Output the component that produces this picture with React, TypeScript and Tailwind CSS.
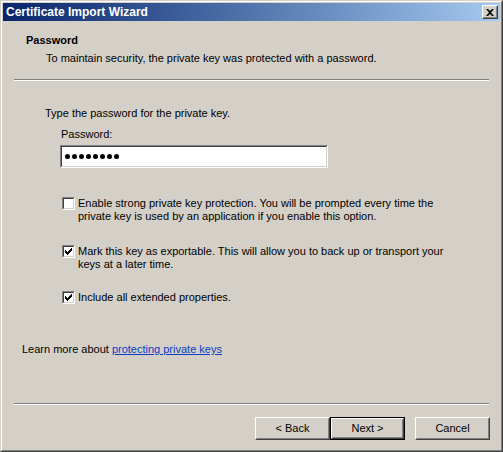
import React from "react";

function Check({ checked }: { checked?: boolean }) {
  return (
    <div className="shrink-0 w-[13px] h-[13px] border border-t-[#808080] border-l-[#808080] border-b-white border-r-white">
      <div className="w-full h-full border border-t-[#404040] border-l-[#404040] border-b-[#d4d0c8] border-r-[#d4d0c8] bg-white flex items-center justify-center">
        {checked && (
          <svg width="7" height="7" viewBox="0 0 7 7">
            <path d="M0 2h1v1h1v1h1V3h1V2h1V1h1V0h1v3H6v1H5v1H4v1H3v1H2V6H1V5H0z" fill="#000" />
          </svg>
        )}
      </div>
    </div>
  );
}

function Button({ label, isDefault }: { label: string; isDefault?: boolean }) {
  const face = (
    <div className="w-full h-full border border-t-white border-l-white border-b-[#404040] border-r-[#404040]">
      <div className="w-full h-full border border-t-[#d4d0c8] border-l-[#d4d0c8] border-b-[#808080] border-r-[#808080] flex items-center justify-center text-black">
        {label}
      </div>
    </div>
  );
  return (
    <div className={"w-[75px] h-[23px] " + (isDefault ? "border border-black" : "")}>{face}</div>
  );
}

function Separator() {
  return <div className="ml-[11px] w-[475px] h-[2px] border-t border-t-[#808080] border-b border-b-white" />;
}

export default function App() {
  return (
    <div
      className="w-[503px] h-[452px] bg-[#d4d0c8] border border-t-[#d4d0c8] border-l-[#d4d0c8] border-b-[#404040] border-r-[#404040] text-[11px] leading-[13px] text-black"
      style={{ fontFamily: '"Liberation Sans", Arial, sans-serif' }}
    >
      <div className="w-full h-full border border-t-white border-l-white border-b-[#808080] border-r-[#808080] p-px flex flex-col">
        {/* title bar */}
        <div className="h-[18px] shrink-0 flex items-center justify-between pl-[3px] pr-[2px] bg-gradient-to-r from-[#0a246a] to-[#a6caf0]">
          <span className="text-white font-bold text-[12px]">Certificate Import Wizard</span>
          <div className="w-[16px] h-[14px] border border-t-white border-l-white border-b-[#404040] border-r-[#404040] bg-[#d4d0c8]">
            <div className="w-full h-full border border-t-[#d4d0c8] border-l-[#d4d0c8] border-b-[#808080] border-r-[#808080] flex items-center justify-center">
              <svg width="8" height="7" viewBox="0 0 8 7">
                <path d="M0 0h2l2 2 2-2h2L5 3.5 8 7H6L4 5 2 7H0l3-3.5z" fill="#000" />
              </svg>
            </div>
          </div>
        </div>

        {/* header */}
        <div className="pt-[13px] pl-[23px] font-bold">Password</div>
        <div className="mt-[5px] pl-[43px]">To maintain security, the private key was protected with a password.</div>
        <div className="mt-[14px]">
          <Separator />
        </div>

        {/* body */}
        <div className="mt-[26px] pl-[42px]">Type the password for the private key.</div>
        <div className="mt-[8px] pl-[58px]">Password:</div>
        <div className="mt-[4px] ml-[57px] w-[268px] h-[23px] border border-t-[#808080] border-l-[#808080] border-b-white border-r-white">
          <div className="w-full h-full border border-t-[#404040] border-l-[#404040] border-b-[#d4d0c8] border-r-[#d4d0c8] bg-white flex items-center pl-[3px] gap-[2px]">
            {Array.from({ length: 8 }).map((_, i) => (
              <span key={i} className="w-[5px] h-[5px] rounded-full bg-black" />
            ))}
          </div>
        </div>

        <div className="mt-[29px] ml-[59px] flex gap-[3px]">
          <Check />
          <div>
            Enable strong private key protection. You will be prompted every time the
            <br />
            private key is used by an application if you enable this option.
          </div>
        </div>
        <div className="mt-[22px] ml-[59px] flex gap-[3px]">
          <Check checked />
          <div>
            Mark this key as exportable. This will allow you to back up or transport your
            <br />
            keys at a later time.
          </div>
        </div>
        <div className="mt-[20px] ml-[59px] flex gap-[3px]">
          <Check checked />
          <div>Include all extended properties.</div>
        </div>

        <div className="mt-[39px] pl-[19px]">
          Learn more about <span className="text-[#0b3cc1] underline">protecting private keys</span>
        </div>

        <div className="mt-[47px]">
          <Separator />
        </div>

        <div className="mt-[12px] flex justify-end pr-[10px]">
          <Button label="< Back" />
          <Button label="Next >" isDefault />
          <div className="w-[10px]" />
          <Button label="Cancel" />
        </div>
      </div>
    </div>
  );
}
